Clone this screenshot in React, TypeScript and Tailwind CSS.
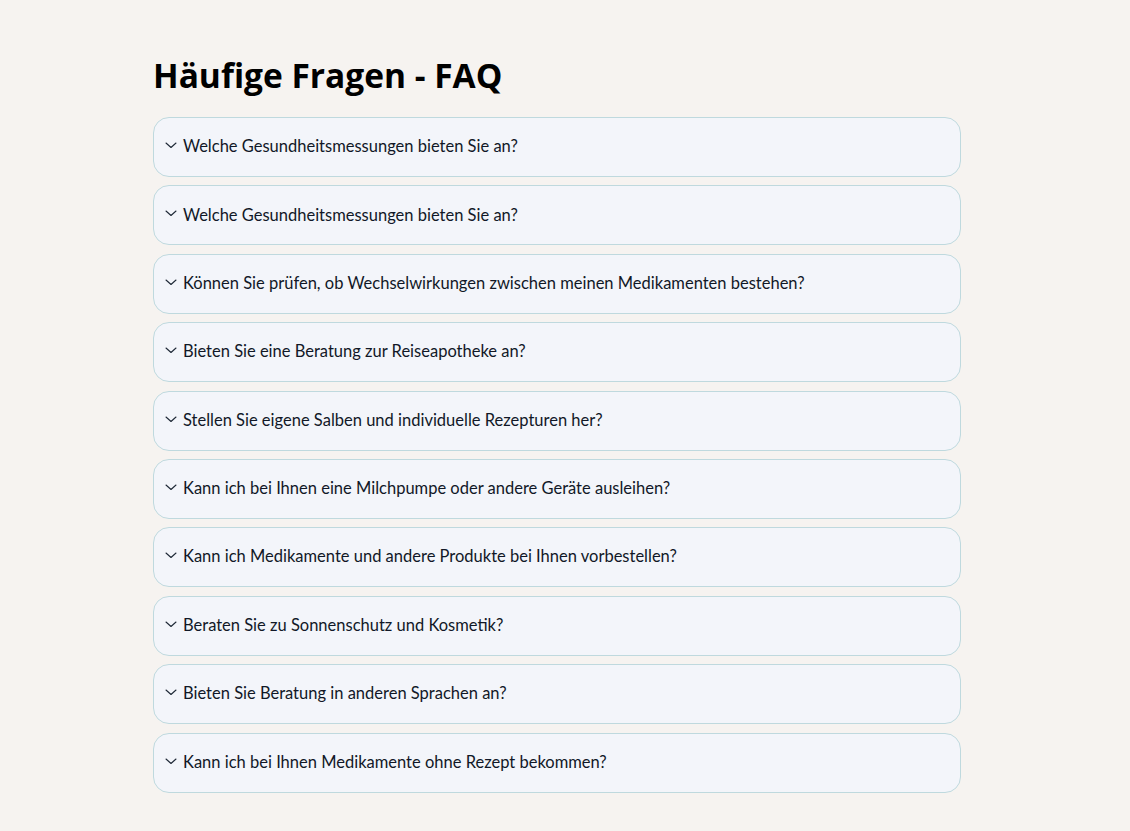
import React from 'react';

const questions = [
  'Welche Gesundheitsmessungen bieten Sie an?',
  'Welche Gesundheitsmessungen bieten Sie an?',
  'Können Sie prüfen, ob Wechselwirkungen zwischen meinen Medikamenten bestehen?',
  'Bieten Sie eine Beratung zur Reiseapotheke an?',
  'Stellen Sie eigene Salben und individuelle Rezepturen her?',
  'Kann ich bei Ihnen eine Milchpumpe oder andere Geräte ausleihen?',
  'Kann ich Medikamente und andere Produkte bei Ihnen vorbestellen?',
  'Beraten Sie zu Sonnenschutz und Kosmetik?',
  'Bieten Sie Beratung in anderen Sprachen an?',
  'Kann ich bei Ihnen Medikamente ohne Rezept bekommen?',
];

const Chevron = () => (
  <svg width="12" height="12" viewBox="0 0 12 12" fill="none" className="shrink-0 -mt-[3px]">
    <path d="M1 4 L6 8.5 L11 4" stroke="#1f2937" strokeWidth="1.1" strokeLinecap="round" strokeLinejoin="round" />
  </svg>
);

export default function App() {
  return (
    <div className="min-h-screen bg-[#f6f3f0]">
      <div className="w-[808px] ml-[153px] pt-[52px] pb-[38px]">
        <h1 className="text-[33.5px] leading-[46px] font-bold text-black mb-[19px]" style={{ fontFamily: '"Open Sans", "Noto Sans", sans-serif' }}>
          Häufige Fragen - FAQ
        </h1>
        <div className="flex flex-col gap-[8.4px]">
          {questions.map((q, i) => (
            <div key={i} className="h-[60px] rounded-[16px] border border-[#bfd9de] bg-[#f3f5fa] flex items-center gap-[6px] pl-[11px] pb-[1px]">
              <Chevron />
              <span className="text-[16.5px] text-[#111827]" style={{ fontFamily: 'Lato, sans-serif' }}>{q}</span>
            </div>
          ))}
        </div>
      </div>
    </div>
  );
}
